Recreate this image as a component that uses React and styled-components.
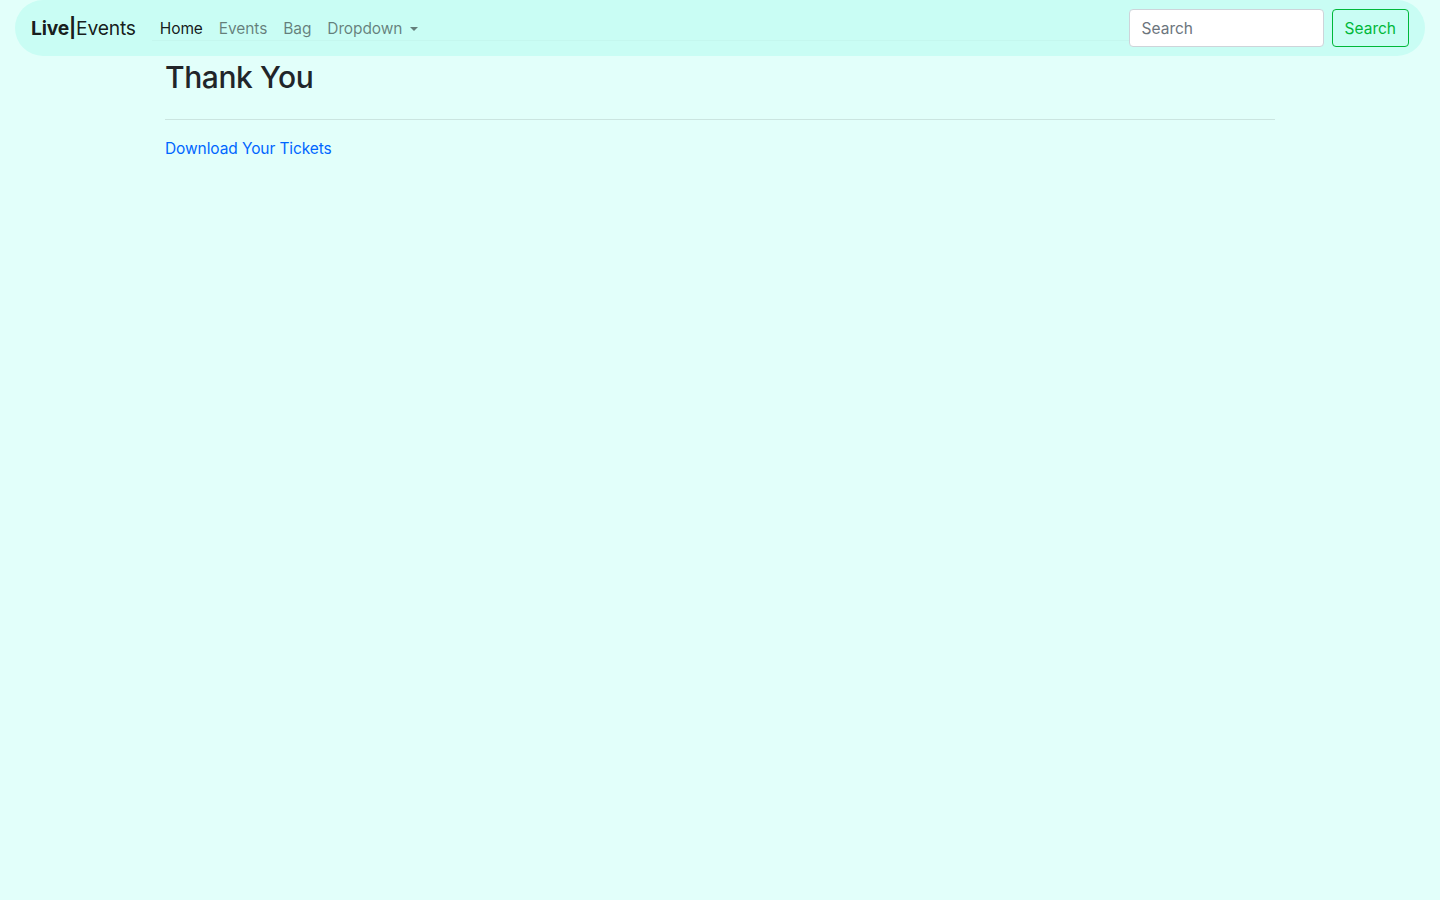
import React from "react";
import styled, { createGlobalStyle } from "styled-components";

const Global = createGlobalStyle`
  html, body { margin: 0; padding: 0; }
  body {
    background: #e2fffa;
    font-family: Inter, "Noto Sans", "Liberation Sans", sans-serif;
    font-size: 16px;
    line-height: 1.5;
    color: #212529;
    min-height: 100vh;
  }
  * { box-sizing: border-box; }
`;

const Page = styled.div`
  padding: 0 15px;
`;

const Navbar = styled.nav`
  display: flex;
  align-items: center;
  height: 56px;
  padding: 8px 16px;
  background: #c9fdf4;
  border-radius: 30px;
`;

const Brand = styled.a`
  font-size: 19.3px;
  letter-spacing: -0.2px;
  color: rgba(0, 0, 0, 0.9);
  text-decoration: none;
  margin-right: 16px;
  padding-top: 2px;
  line-height: 1;
  b { font-weight: 700; }
`;

const NavList = styled.ul`
  display: flex;
  align-items: center;
  list-style: none;
  margin: 0 0 7px;
  padding: 9px 0 0;
  flex: 1;
  align-self: stretch;
  border-bottom: 1px solid rgba(0, 0, 0, 0.025);
`;

const NavLink = styled.a`
  display: flex;
  align-items: center;
  padding: 0 8px;
  font-size: 15.5px;
  letter-spacing: -0.1px;
  text-decoration: none;
  color: ${(p) => (p.$active ? "rgba(0,0,0,0.9)" : "rgba(0,0,0,0.5)")};
  cursor: pointer;
`;

const Caret = styled.span`
  display: inline-block;
  margin-left: 8px;
  width: 0;
  height: 0;
  border-top: 4px solid currentColor;
  border-left: 4px solid transparent;
  border-right: 4px solid transparent;
`;

const Form = styled.form`
  display: flex;
  align-items: center;
  gap: 8px;
`;

const Input = styled.input`
  width: 195px;
  height: 38px;
  padding: 6px 12px;
  font-family: inherit;
  font-size: 15.5px;
  color: #495057;
  background: #fff;
  border: 1px solid #ced4da;
  border-radius: 4px;
  outline: none;
  &::placeholder { color: #6c757d; }
`;

const Button = styled.button`
  height: 38px;
  padding: 6px 12px;
  font-family: inherit;
  font-size: 15.5px;
  color: #00b83a;
  background: transparent;
  border: 1px solid #00b83a;
  border-radius: 4px;
  cursor: pointer;
`;

const Container = styled.main`
  width: 1110px;
  margin: 0 auto;
`;

const Title = styled.h2`
  margin: 0 0 24px;
  padding-top: 3px;
  font-size: 30px;
  font-weight: 500;
  letter-spacing: -0.4px;
  line-height: 1.2;
  color: #212529;
`;

const Rule = styled.hr`
  margin: 16px 0;
  border: 0;
  border-top: 1px solid rgba(0, 0, 0, 0.1);
`;

const Link = styled.a`
  font-size: 15.5px;
  letter-spacing: -0.1px;
  color: #0066ff;
  text-decoration: none;
`;

export default function App() {
  return (
    <>
      <Global />
      <Page>
        <Navbar>
          <Brand href="#"><b>Live|</b>Events</Brand>
          <NavList>
            <li><NavLink $active>Home</NavLink></li>
            <li><NavLink>Events</NavLink></li>
            <li><NavLink>Bag</NavLink></li>
            <li><NavLink>Dropdown<Caret /></NavLink></li>
          </NavList>
          <Form onSubmit={(e) => e.preventDefault()}>
            <Input placeholder="Search" />
            <Button type="submit">Search</Button>
          </Form>
        </Navbar>
        <Container>
          <Title>Thank You</Title>
          <Rule />
          <Link href="#">Download Your Tickets</Link>
        </Container>
      </Page>
    </>
  );
}
